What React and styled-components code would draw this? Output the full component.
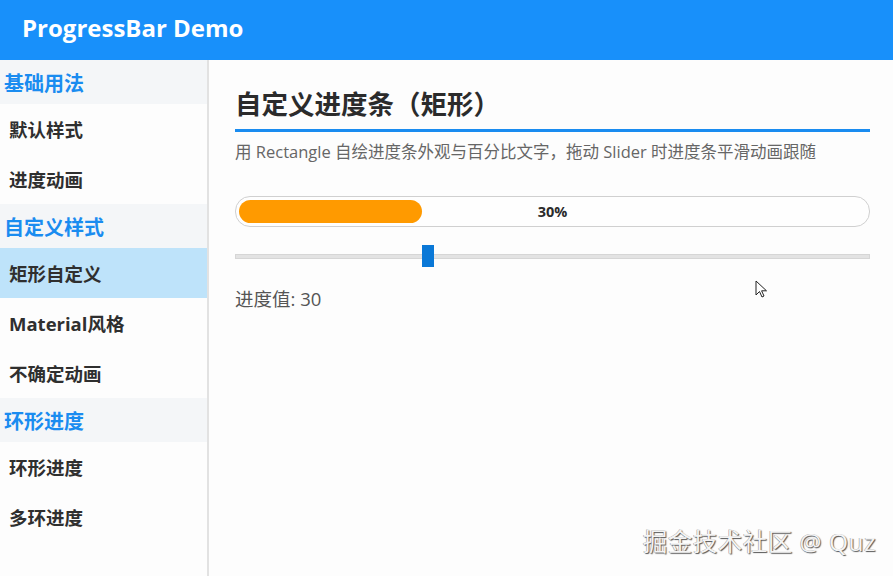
import React, { useState } from "react";
import styled, { createGlobalStyle } from "styled-components";

const GlobalStyle = createGlobalStyle`
  html, body {
    margin: 0;
    padding: 0;
    height: 100%;
  }
  body {
    font-family: "Open Sans", "Noto Sans CJK SC", sans-serif;
    background: #fdfdfd;
    overflow: hidden;
  }
  #root {
    height: 100%;
  }
`;

const Page = styled.div`
  display: flex;
  flex-direction: column;
  width: 893px;
  height: 576px;
  position: relative;
`;

const Header = styled.div`
  height: 60px;
  box-sizing: border-box;
  flex-shrink: 0;
  background-color: #1890fa;
  display: flex;
  align-items: center;
  padding: 0 0 6px 22px;
  color: white;
  font-size: 24px;
  font-weight: 700;
`;

const Body = styled.div`
  flex: 1;
  display: flex;
  min-height: 0;
`;

const Sidebar = styled.div`
  width: 207px;
  flex-shrink: 0;
  background-color: #fdfdfd;
  border-right: 2px solid #e2e2e2;
  display: flex;
  flex-direction: column;
`;

const GroupTitle = styled.div`
  height: 44px;
  display: flex;
  align-items: center;
  padding-left: 4px;
  background-color: #f4f6f8;
  color: #1a8cf0;
  font-size: 20px;
  font-weight: 700;
`;

const NavItem = styled.div`
  height: 50px;
  display: flex;
  align-items: center;
  padding-left: 9px;
  background-color: ${(p) => (p.$active ? "#bee3fa" : "transparent")};
  color: #2f2f2f;
  font-size: 18.5px;
  font-weight: 700;
  cursor: pointer;
`;

const Content = styled.div`
  flex: 1;
  padding: 25px 23px 0 26px;
  display: flex;
  flex-direction: column;
`;

const Title = styled.h2`
  margin: 0;
  font-size: 26.5px;
  font-weight: 700;
  color: #2b2b2b;
  padding-bottom: 6px;
  border-bottom: 3px solid #1a8cf0;
  line-height: 38px;
`;

const Desc = styled.p`
  margin: 7px 0 0;
  font-size: 16.5px;
  color: #666;
  line-height: 26px;
  white-space: nowrap;
`;

const Bar = styled.div`
  margin-top: 31px;
  height: 31px;
  box-sizing: border-box;
  border: 1px solid #d0d0d0;
  border-radius: 15px;
  background: #fefefe;
  padding: 3px;
  position: relative;
`;

const Fill = styled.div`
  height: 100%;
  background-color: #ff9a00;
  border-radius: 12px;
`;

const BarLabel = styled.span`
  position: absolute;
  inset: 0;
  display: flex;
  align-items: center;
  justify-content: center;
  font-size: 14.5px;
  font-weight: 700;
  color: #2b2b2b;
`;

const Slider = styled.div`
  margin-top: 18px;
  height: 22px;
  position: relative;
  display: flex;
  align-items: center;
`;

const Track = styled.div`
  width: 100%;
  height: 5px;
  background: #e3e3e3;
  border: 1px solid #d6d6d6;
  box-sizing: border-box;
`;

const Handle = styled.div`
  position: absolute;
  top: 0;
  width: 12px;
  height: 22px;
  background-color: #0a78d7;
`;

const ValueText = styled.div`
  margin-top: 20px;
  font-size: 18.5px;
  line-height: 24px;
  color: #555;
`;

const Watermark = styled.div`
  position: absolute;
  right: 17px;
  bottom: 18px;
  font-size: 24.5px;
  color: #f4f4f4;
  text-shadow: 1px 1px 1px #555, -0.5px -0.5px 0 #999;
  letter-spacing: 0.5px;
`;

const Cursor = styled.svg`
  position: absolute;
  left: 755px;
  top: 280px;
`;

const groups = [
  { title: "基础用法", items: ["默认样式", "进度动画"] },
  { title: "自定义样式", items: ["矩形自定义", "Material风格", "不确定动画"] },
  { title: "环形进度", items: ["环形进度", "多环进度"] },
];

export default function App() {
  const [active, setActive] = useState("矩形自定义");
  const value = 30;

  return (
    <>
      <GlobalStyle />
      <Page>
        <Header>ProgressBar Demo</Header>
        <Body>
          <Sidebar>
            {groups.map((g) => (
              <React.Fragment key={g.title}>
                <GroupTitle>{g.title}</GroupTitle>
                {g.items.map((it) => (
                  <NavItem key={it} $active={it === active} onClick={() => setActive(it)}>
                    {it}
                  </NavItem>
                ))}
              </React.Fragment>
            ))}
          </Sidebar>
          <Content>
            <Title>自定义进度条（矩形）</Title>
            <Desc>用 Rectangle 自绘进度条外观与百分比文字，拖动 Slider 时进度条平滑动画跟随</Desc>
            <Bar>
              <Fill style={{ width: `calc(${value}% - 5px)` }} />
              <BarLabel>{value}%</BarLabel>
            </Bar>
            <Slider>
              <Track />
              <Handle style={{ left: `calc((100% - 12px) * ${value / 100})` }} />
            </Slider>
            <ValueText>进度值: {value}</ValueText>
          </Content>
        </Body>
        <Cursor width="14" height="20" viewBox="0 0 14 20">
          <path d="M1 1 L1 15 L4.5 11.5 L7 17 L9 16 L6.6 10.8 L11.5 10.8 Z" fill="#fff" stroke="#222" strokeWidth="1" strokeLinejoin="round" />
        </Cursor>
        <Watermark>掘金技术社区 @ Quz</Watermark>
      </Page>
    </>
  );
}
